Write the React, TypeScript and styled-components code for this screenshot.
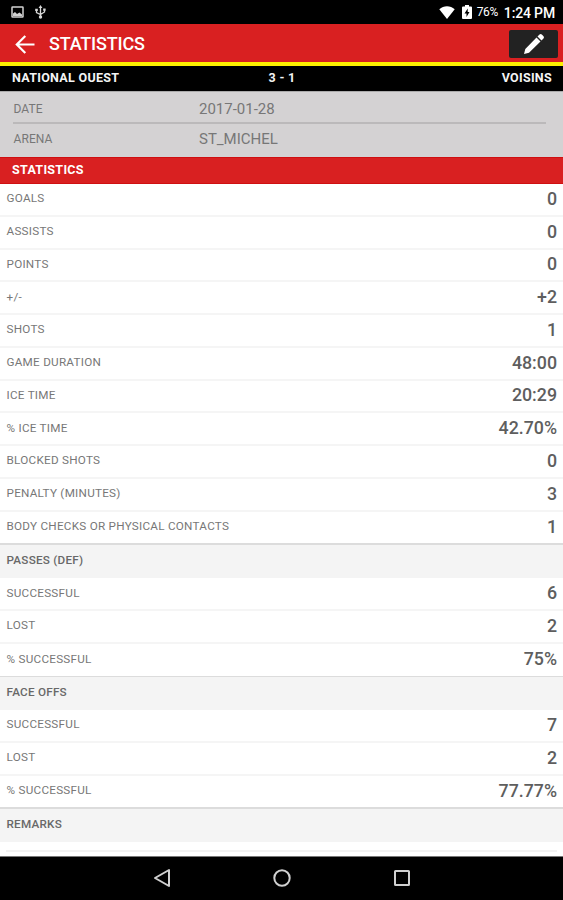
import React from 'react';
import styled, { createGlobalStyle } from 'styled-components';

const GlobalStyle = createGlobalStyle`
  * { box-sizing: border-box; }
  body { margin: 0; background: #000; overflow: hidden; }
`;

const Screen = styled.div`
  width: 563px;
  height: 900px;
  display: flex;
  flex-direction: column;
  overflow: hidden;
  background: #fff;
  font-family: Roboto, sans-serif;
  color: #777;
`;

const StatusBar = styled.header`
  flex: none;
  height: 24px;
  display: flex;
  align-items: center;
  padding: 0 8px 0 11px;
  background: #000;
  color: #fff;
`;

const Notifications = styled.div`
  display: flex;
  align-items: center;
  gap: 11px;
  flex: 1;
`;

const Battery = styled.span`
  font-size: 12px;
  letter-spacing: -0.4px;
  margin: 0 6px 0 5px;
`;

const Clock = styled.span`
  margin-top: 1px;
  font-size: 14px;
  font-weight: 500;
  letter-spacing: -0.15px;
`;

const WifiIcon = styled.svg`
  margin-right: 7px;
`;

const AppBar = styled.div`
  flex: none;
  height: 38px;
  display: flex;
  align-items: center;
  padding: 2px 5px 0 15px;
  background: #d92021;
  color: #fff;
`;

const Title = styled.h1`
  flex: 1;
  margin: 0 0 0 14px;
  font-size: 18px;
  line-height: 24px;
  font-weight: 500;
  letter-spacing: -0.18px;
`;

const EditButton = styled.button`
  width: 49px;
  height: 28px;
  border: 0;
  border-radius: 2px;
  padding: 0;
  display: flex;
  align-items: center;
  justify-content: center;
  background: #222;
`;

const ScoreBar = styled.div`
  flex: none;
  height: 29px;
  display: grid;
  grid-template-columns: 1fr auto 1fr;
  align-items: center;
  padding: 0 11px 3px 12px;
  border-top: 4px solid #fdf000;
  background: #000;
  color: #f4f4f4;
  font-size: 12.5px;
  font-weight: 700;
  letter-spacing: 0.3px;
`;

const Away = styled.span`
  text-align: right;
`;

const Details = styled.section`
  flex: none;
  height: 66px;
  padding: 3px 17px 0 13px;
  border-top: 1px solid #aaa;
  background: #d4d2d3;
`;

const Detail = styled.div<{ $ruled?: boolean }>`
  display: grid;
  grid-template-columns: 186px 1fr;
  align-items: center;
  height: ${p => (p.$ruled ? 29 : 30)}px;
  border-bottom: ${p => (p.$ruled ? '2px solid #bbb9ba' : '0')};
`;

const DetailLabel = styled.span`
  padding-left: 0.5px;
  font-size: 12px;
  letter-spacing: 0.1px;
`;

const DetailValue = styled.span`
  font-size: 15px;
`;

const SectionBar = styled.h2`
  flex: none;
  height: 27px;
  margin: 0;
  padding-left: 12px;
  border: solid #cf1012;
  border-width: 1px 0;
  background: #d92021;
  color: #fff;
  font-size: 12.5px;
  line-height: 24px;
  font-weight: 700;
  letter-spacing: 0.3px;
`;

const Table = styled.main`
  height: 672px;
  flex: none;
  overflow: hidden;
`;

const Row = styled.div<{ $last?: boolean }>`
  height: ${p => (p.$last ? 31.75 : 32.75)}px;
  padding: 0 6px 1px 6.5px;
  display: flex;
  align-items: center;
  justify-content: space-between;
  border-bottom: ${p => (p.$last ? '0' : '2px solid #f5f5f5')};
`;

const Label = styled.span`
  margin-bottom: 1px;
  font-size: 11.7px;
  letter-spacing: 0.26px;
`;

const Value = styled.span`
  font-size: 17.8px;
  line-height: 24px;
  font-weight: 500;
  color: #5e5e5e;
`;

const GroupTitle = styled.h3<{ $thin?: boolean }>`
  height: ${p => (p.$thin ? 34.5 : 35)}px;
  margin: 0;
  padding-left: 6.5px;
  border-top: ${p => (p.$thin ? '1px' : '2px')} solid #dcdcdc;
  background: #f4f4f4;
  font-size: 11.7px;
  line-height: 30px;
  font-weight: 500;
  letter-spacing: 0.24px;
  color: #686868;
`;

const RemarksField = styled.div`
  height: 10px;
  margin: 0 6px;
  border-bottom: 2px solid #f2f2f2;
`;

const NavBar = styled.nav`
  flex: none;
  height: 44px;
  display: flex;
  justify-content: center;
  align-items: center;
  gap: 100px;
  padding-bottom: 1px;
  border-top: 1px solid #777;
  background: #000;
`;

const general = [
  ['GOALS', '0'], ['ASSISTS', '0'], ['POINTS', '0'], ['+/-', '+2'], ['SHOTS', '1'],
  ['GAME DURATION', '48:00'], ['ICE TIME', '20:29'], ['% ICE TIME', '42.70%'],
  ['BLOCKED SHOTS', '0'], ['PENALTY (MINUTES)', '3'], ['BODY CHECKS OR PHYSICAL CONTACTS', '1'],
];
const passes = [['SUCCESSFUL', '6'], ['LOST', '2'], ['% SUCCESSFUL', '75%']];
const faceOffs = [['SUCCESSFUL', '7'], ['LOST', '2'], ['% SUCCESSFUL', '77.77%']];

function Rows({ items }: { items: string[][] }) {
  return (
    <>
      {items.map(([label, value], i) => (
        <Row key={label} $last={i === items.length - 1}>
          <Label>{label}</Label>
          <Value>{value}</Value>
        </Row>
      ))}
    </>
  );
}

export default function App() {
  return (
    <Screen>
      <GlobalStyle />
      <StatusBar>
        <Notifications>
          <svg width="13" height="12" viewBox="0 0 13 12" fill="none">
            <rect x="1" y="1" width="11" height="10" rx=".5" stroke="#d2d2d2" strokeWidth="1.5" />
            <path d="M2 10V7.500l2-1.500 2 2 2.500-1.500L11 8.500V10z" fill="#d2d2d2" />
          </svg>
          <svg width="11" height="14" viewBox="0 0 11 14" fill="none" stroke="#d8d8d8" strokeWidth="1.3">
            <path d="M5.5 2v10M1.5 5v2.5l4 2 4-2.5V4" />
            <path d="M5.5 0 3.6 3h3.8zM0.2 3.8h2.6v2.2H.2zM8.2 3.4h2.4v2.4H8.2z" fill="#d8d8d8" stroke="none" />
            <circle cx="5.5" cy="12" r="1.7" fill="#d8d8d8" stroke="none" />
          </svg>
        </Notifications>
        <WifiIcon width="16" height="13" viewBox="0 0 17 13" preserveAspectRatio="none">
          <path d="M.3 3.2C5-.8 12-.8 16.700 3.200L8.500 13z" fill="#fff" />
        </WifiIcon>
        <svg width="10" height="14" viewBox="0 0 10 14">
          <path d="M3 0h4v1.500h2a1 1 0 0 1 1 1V13a1 1 0 0 1-1 1H1a1 1 0 0 1-1-1V2.500a1 1 0 0 1 1-1h2z" fill="#fff" />
          <path d="M5.700 3.500 2.500 8.500h2V12l3-5h-1.800z" fill="#000" />
        </svg>
        <Battery>76%</Battery>
        <Clock>1:24 PM</Clock>
      </StatusBar>
      <AppBar>
        <svg width="20" height="19" viewBox="0 0 20 19" fill="none" stroke="#fff" strokeWidth="2.200">
          <path d="M19.500 9.500H2M10.300 1 1.800 9.500l8.500 8.500" />
        </svg>
        <Title>STATISTICS</Title>
        <EditButton aria-label="Edit">
          <svg width="22" height="22" viewBox="0 0 22 22" fill="#fff">
            <path d="M1 21 2.300 16 13.500 4.500l4 4L6 19.700zM14.500 3.500l2-2q1.200-1 2.300 0l1.700 1.700q1 1.100 0 2.300l-2 2z" />
          </svg>
        </EditButton>
      </AppBar>
      <ScoreBar>
        <span>NATIONAL OUEST</span>
        <span>3 - 1</span>
        <Away>VOISINS</Away>
      </ScoreBar>
      <Details>
        <Detail $ruled>
          <DetailLabel>DATE</DetailLabel>
          <DetailValue>2017-01-28</DetailValue>
        </Detail>
        <Detail>
          <DetailLabel>ARENA</DetailLabel>
          <DetailValue>ST_MICHEL</DetailValue>
        </Detail>
      </Details>
      <SectionBar>STATISTICS</SectionBar>
      <Table>
        <Rows items={general} />
        <GroupTitle>PASSES (DEF)</GroupTitle>
        <Rows items={passes} />
        <GroupTitle $thin>FACE OFFS</GroupTitle>
        <Rows items={faceOffs} />
        <GroupTitle>REMARKS</GroupTitle>
        <RemarksField />
      </Table>
      <NavBar>
        <svg width="20" height="20" viewBox="0 0 20 20" fill="none" stroke="#d0d0d0" strokeWidth="2">
          <path d="M17 2v16L3 10z" strokeLinejoin="round" />
        </svg>
        <svg width="20" height="20" viewBox="0 0 20 20" fill="none" stroke="#d0d0d0" strokeWidth="2">
          <circle cx="10" cy="10" r="7.700" />
        </svg>
        <svg width="20" height="20" viewBox="0 0 20 20" fill="none" stroke="#d0d0d0" strokeWidth="2">
          <rect x="3" y="3" width="14" height="14" rx=".5" />
        </svg>
      </NavBar>
    </Screen>
  );
}
